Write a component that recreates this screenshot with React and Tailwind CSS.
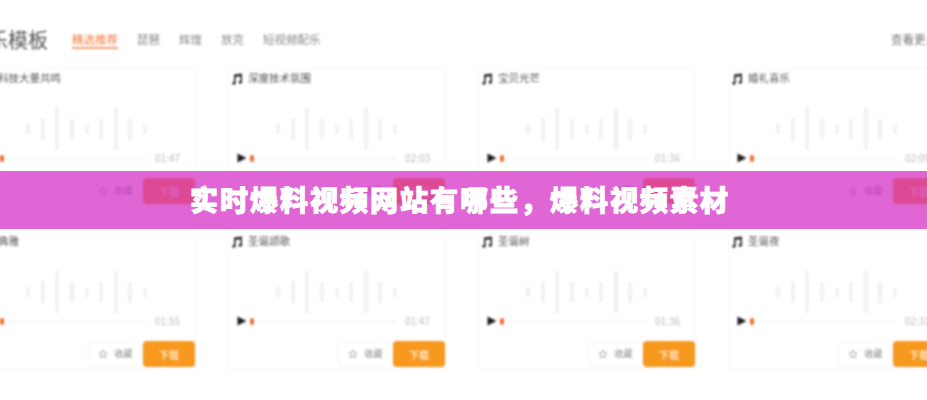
import React from 'react'

const tabs = ['琵琶', '辉煌', '放克', '短视频配乐']

const cards = [
    { title: '科技大量共鸣', time: '01:47' },
    { title: '深度技术氛围', time: '02:03' },
    { title: '宝贝光芒', time: '01:36' },
    { title: '婚礼喜乐', time: '02:09' },
    { title: '典雅', time: '01:55' },
    { title: '圣诞颂歌', time: '01:47' },
    { title: '圣诞树', time: '01:36' },
    { title: '圣诞夜', time: '02:31' },
]

const bars = ['h-[10px]', 'h-[22px]', 'h-[42px]', 'h-[20px]', 'h-[9px]', 'h-[20px]', 'h-[42px]', 'h-[21px]', 'h-[9px]']

const MusicIcon = () => (
    <svg viewBox="0 0 12 12" className="w-3 h-3 shrink-0" fill="#222">
        <path d="M3 1.5 L11 0.5 V9.2 A1.7 1.4 0 1 1 9.4 7.9 V3.2 L4.6 3.8 V10.2 A1.7 1.4 0 1 1 3 8.9 Z" />
    </svg>
)

const PlayIcon = () => (
    <svg viewBox="0 0 10 10" className="w-[10px] h-[10px] shrink-0" fill="#1c1c1c">
        <path d="M0.5 0.5 L9.5 5 L0.5 9.5 Z" />
    </svg>
)

const StarIcon = () => (
    <svg viewBox="0 0 12 12" className="w-[10px] h-[10px] shrink-0" fill="none" stroke="#999" strokeWidth="1">
        <path d="M6 1.2 L7.4 4.3 L10.8 4.7 L8.3 7 L9 10.4 L6 8.7 L3 10.4 L3.7 7 L1.2 4.7 L4.6 4.3 Z" />
    </svg>
)

const Card = ({ title, time }) => (
    <div className="h-[140px] rounded border border-[#f6f6f6] bg-white flex flex-col">
        <div className="flex items-center gap-[5px] pl-[2px] pt-[2px] h-[17px]">
            <MusicIcon />
            <span className="text-[10.5px] leading-none text-[#555]">{title}</span>
        </div>
        <div className="flex items-center justify-center gap-[10.6px] h-[46px] mt-[20px] pr-[1px]">
            {bars.map((h, i) => (
                <div key={i} className={`w-1 bg-[#f2f2f2] ${h}`} />
            ))}
        </div>
        <div className="flex items-center h-[12px] pl-[8px]">
            <PlayIcon />
            <div className="w-[4px] h-[7px] ml-[3px] rounded-sm bg-[#f0692c]" />
            <div className="w-[140px] h-[1px] ml-[2px] bg-[#eeeeee]" />
            <span className="ml-[9px] text-[10px] leading-none text-[#bbb]">{time}</span>
        </div>
        <div className="flex justify-end items-center mt-[14px]">
            <div className="w-[55px] h-[26px] flex items-center justify-center gap-[6px] border border-[#f5f5f5] rounded-l">
                <StarIcon />
                <span className="text-[9px] text-[#888]">收藏</span>
            </div>
            <div className="w-[52px] h-[26px] flex items-center justify-center rounded-sm bg-[#f7981f]">
                <span className="text-[10px] text-[#fff3e0] font-medium">下载</span>
            </div>
        </div>
    </div>
)

const App = () => {
    return (
        <div className="relative w-[927px] h-[400px] overflow-hidden bg-white font-['Noto_Sans_CJK_SC','Noto_Sans',sans-serif]">
            <div className="blur-[1px]">
                <div className="flex items-center justify-between w-[978px] ml-[-32px] pt-[28px] h-[68px] pb-[16px]">
                    <div className="flex items-center gap-[24px]">
                        <h2 className="text-[20px] leading-none text-[#555] w-[80px]">音乐模板</h2>
                        <div className="flex items-center gap-[19px]">
                            <span className="text-[11.5px] leading-[16px] text-[#f4793b] border-b-2 border-[#f79a70]">精选推荐</span>
                            {tabs.map((tab) => (
                                <span key={tab} className="text-[11.5px] leading-[16px] text-[#888] pb-[2px]">{tab}</span>
                            ))}
                        </div>
                    </div>
                    <span className="text-[11.5px] text-[#777]">查看更多 &gt;</span>
                </div>
                <div className="grid grid-cols-4 gap-x-[32px] gap-y-[23px] w-[968px] ml-[-22px]">
                    {cards.map((card) => (
                        <Card key={card.title} {...card} />
                    ))}
                </div>
            </div>
            <div className="absolute left-0 right-0 top-[171px] h-[58px] bg-[#d22bc4]/72 flex items-center justify-center">
                <h1 className="text-[28px] leading-none tracking-[2px] font-black text-white [-webkit-text-stroke:0.9px_white] pb-[2px] mr-[7px]">{'实时爆料视频网站有哪些\uFF0C爆料视频素材'}</h1>
            </div>
        </div>
    )
}

export default App
